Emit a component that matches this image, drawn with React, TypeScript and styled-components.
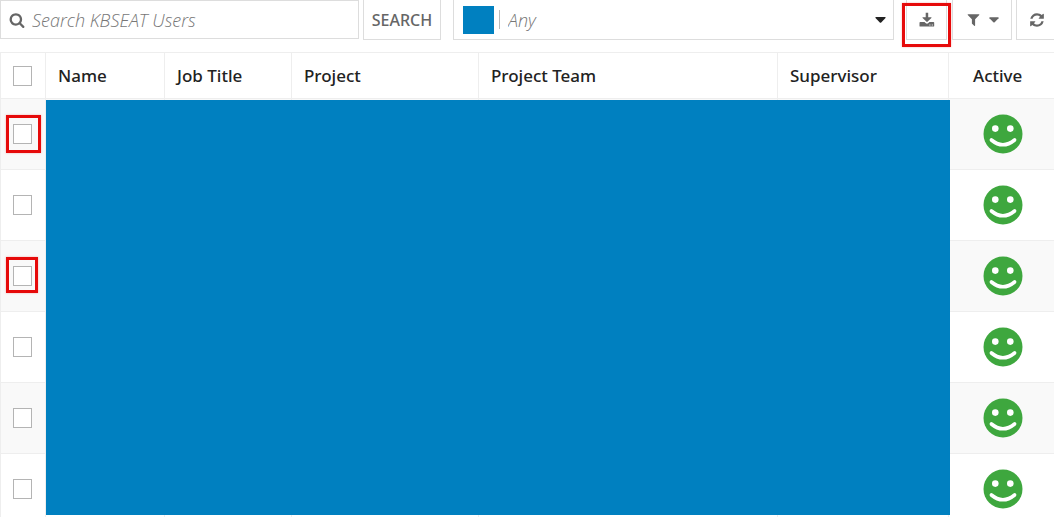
import React from "react";
import styled, { createGlobalStyle } from "styled-components";

const BLUE = "#0080c0";
const RED = "#e60a0a";
const LINE = "#eeeeee";
const EDGE = "#dddddd";

const GlobalStyle = createGlobalStyle`
  *, *::before, *::after { box-sizing: border-box; }
  html { scrollbar-width: none; }
  body {
    margin: 0;
    background: #ffffff;
    color: #222222;
    font-family: "Noto Sans", "Open Sans", sans-serif;
    font-size: 16px;
    line-height: 24px;
  }
  button, input, select { font: inherit; color: inherit; }
`;

const Page = styled.main`
  overflow: hidden;
`;

const Toolbar = styled.form`
  display: flex;
  align-items: flex-start;
  height: 52px;
  margin-right: -3px;
`;

const SearchField = styled.label`
  display: flex;
  align-items: center;
  flex: 0 1 359px;
  height: 39px;
  padding: 0 8px;
  gap: 7px;
  border: 1px solid ${EDGE};
  color: #666666;
`;

const SearchInput = styled.input`
  flex: 1;
  min-width: 0;
  padding: 0;
  border: 0;
  outline: 0;
  background: transparent;
  font-family: "Open Sans", sans-serif;
  font-size: 18px;
  &::placeholder {
    color: #777777;
    font-style: italic;
    font-weight: 300;
    opacity: 1;
  }
`;

const ToolButton = styled.button<{ $width: number; $gap: number }>`
  position: relative;
  display: flex;
  align-items: center;
  justify-content: center;
  gap: 8px;
  flex: 0 0 ${(p) => p.$width}px;
  height: 40px;
  margin: 0 0 0 ${(p) => p.$gap}px;
  padding: 0;
  border: 1px solid ${EDGE};
  border-top: 0;
  background: #ffffff;
  color: #666666;
  font-weight: 500;
`;

const FilterBox = styled.label`
  display: flex;
  align-items: center;
  flex: 1;
  min-width: 0;
  height: 40px;
  margin-left: 12px;
  padding: 0 7px 0 9px;
  border: 1px solid ${EDGE};
  border-top: 0;
`;

const Swatch = styled.span`
  width: 31px;
  height: 28px;
  background: ${BLUE};
`;

const Divider = styled.span`
  width: 1px;
  height: 19px;
  margin: 0 8px 0 5px;
  background: #bbbbbb;
`;

const FilterSelect = styled.select`
  flex: 1;
  min-width: 0;
  padding: 0;
  border: 0;
  outline: 0;
  appearance: none;
  background: transparent;
  color: #777777;
  font-family: "Open Sans", sans-serif;
  font-size: 18px;
  font-style: italic;
  font-weight: 300;
`;

const Highlight = styled.span<{ $inset: string }>`
  position: absolute;
  inset: ${(p) => p.$inset};
  border: 3px solid ${RED};
  box-shadow: 0 0 2px rgba(230, 10, 10, 0.3);
  pointer-events: none;
`;

const TableArea = styled.section`
  position: relative;
`;

const Table = styled.table`
  width: 100%;
  table-layout: fixed;
  border-collapse: separate;
  border-spacing: 0;
  border-top: 1px solid ${LINE};
  border-left: 1px solid ${LINE};
`;

const HeadCell = styled.th<{ $width?: number; $indent?: number }>`
  width: ${(p) => (p.$width ? `${p.$width}px` : "auto")};
  height: 46px;
  padding: 0 0 0 ${(p) => p.$indent ?? 12}px;
  border-right: 1px solid ${LINE};
  border-bottom: 1px solid ${LINE};
  text-align: left;
  font-size: 17px;
  font-weight: 500;
  &:last-child { border-right: 0; }
`;

const Row = styled.tr`
  height: 71px;
  &:nth-child(odd) { background: #f9f9f9; }
`;

const Cell = styled.td<{ $indent?: number }>`
  padding: 0 0 0 ${(p) => p.$indent ?? 12}px;
  border-right: 1px solid ${LINE};
  border-bottom: 1px solid ${LINE};
  &:last-child { border-right: 0; }
`;

const Tick = styled.label`
  position: relative;
  display: block;
  width: 19px;
  height: 20px;
`;

const TickInput = styled.input`
  display: block;
  width: 100%;
  height: 100%;
  margin: 0;
  appearance: none;
  border: 1px solid #b4b4b4;
  background: #ffffff;
`;

const Cover = styled.div`
  position: absolute;
  top: 48px;
  right: 104px;
  bottom: 10px;
  left: 46px;
  background: ${BLUE};
`;

const Icon = styled.svg`
  display: block;
  flex: none;
  fill: currentColor;
`;

const GLYPHS = {
  search:
    "M1216 832q0-185-131.5-316.5t-316.5-131.5-316.5 131.5-131.5 316.5 131.5 316.5 316.5 131.5 316.5-131.5 131.5-316.5zm512 832q0 52-38 90t-90 38q-54 0-90-38l-343-342q-179 124-399 124-143 0-273.5-55.5t-225-150-150-225-55.5-273.5 55.5-273.5 150-225 225-150 273.5-55.5 273.5 55.5 225 150 150 225 55.5 273.5q0 220-124 399l343 343q37 37 37 90z",
  filter:
    "M1595 295q17 41-14 70l-493 493v742q0 42-39 59-13 5-25 5-27 0-45-19l-256-256q-19-19-19-45v-486l-493-493q-31-29-14-70 17-39 59-39h1280q42 0 59 39z",
  refresh:
    "M1639 1056q0 5-1 7-64 268-268 434.5t-478 166.5q-146 0-282.5-55t-243.5-157l-129 129q-19 19-45 19t-45-19-19-45v-448q0-26 19-45t45-19h448q26 0 45 19t19 45-19 45l-137 137q71 66 161 102t187 36q134 0 250-65t186-179q11-17 53-117 8-23 30-23h192q13 0 22.5 9.5t9.5 22.5zm25-800v448q0 26-19 45t-45 19h-448q-26 0-45-19t-19-45 19-45l138-138q-148-137-349-137-134 0-250 65t-186 179q-11 17-53 117-8 23-30 23h-199q-13 0-22.5-9.5t-9.5-22.5v-7q65-268 270-434.5t480-166.5q146 0 284 55.5t245 156.5l130-129q19-19 45-19t45 19 19 45z",
};

const Glyph = ({ name, size = 16 }: { name: keyof typeof GLYPHS; size?: number }) => (
  <Icon width={size} height={size} viewBox="0 0 1792 1792" aria-hidden="true">
    <path d={GLYPHS[name]} />
  </Icon>
);

const DownloadIcon = () => (
  <Icon width="16" height="16" viewBox="0 0 16 16" aria-hidden="true">
    <path d="M6.7.8h2.5v4.4h2.9q.8 0 .3.7L8.4 9.8q-.4.4-.8 0L3.6 5.9q-.5-.7.3-.7h2.8z" />
    <path
      fillRule="evenodd"
      d="M1.2 10h4.3l1.4 1.3q1.1.9 2.2 0l1.4-1.3h4q.7 0 .7.7v3.2q0 .7-.7.7H1.2q-.7 0-.7-.7v-3.2q0-.7.7-.7zM10.4 12.4v1.1h1v-1.1zM12.8 12.4v1.1h1v-1.1z"
    />
  </Icon>
);

const Caret = ({ color, width = 11 }: { color?: string; width?: number }) => (
  <Icon width={width} height="6" viewBox="0 0 11 6" aria-hidden="true" color={color}>
    <path d="M1 0h9q1 0 .5 1L6.2 5.4q-.7.6-1.4 0L.5 1Q0 0 1 0z" />
  </Icon>
);

const Smile = () => (
  <Icon width="40" height="40" viewBox="0 0 40 40" role="img" aria-label="Active">
    <circle cx="20" cy="20" r="19.5" fill="#3ea73e" />
    <circle cx="12.3" cy="14.6" r="3.3" fill="#ffffff" />
    <circle cx="27.3" cy="14.6" r="3.3" fill="#ffffff" />
    <path d="M8.4 26Q19.8 35.5 31.6 26" fill="none" stroke="#ffffff" strokeWidth="3.6" strokeLinecap="round" />
  </Icon>
);

const columns = [
  { title: "Name", width: 119 },
  { title: "Job Title", width: 127 },
  { title: "Project", width: 187 },
  { title: "Project Team" },
  { title: "Supervisor", width: 171 },
];

const rows: { id: number; mark?: string }[] = [
  { id: 1, mark: "-9px -9px -9px -7px" },
  { id: 2 },
  { id: 3, mark: "-9px -6px -7px -7px" },
  { id: 4 },
  { id: 5 },
  { id: 6 },
];

export default function App() {
  return (
    <Page>
      <GlobalStyle />
      <Toolbar onSubmit={(e) => e.preventDefault()}>
        <SearchField>
          <Glyph name="search" />
          <SearchInput type="text" placeholder="Search KBSEAT Users" aria-label="Search KBSEAT Users" />
        </SearchField>
        <ToolButton type="submit" $width={78} $gap={4}>SEARCH</ToolButton>
        <FilterBox>
          <Swatch />
          <Divider />
          <FilterSelect aria-label="Filter value">
            <option>Any</option>
          </FilterSelect>
          <Caret color="#222222" />
        </FilterBox>
        <ToolButton type="button" $width={41} $gap={12} aria-label="Download">
          <DownloadIcon />
          <Highlight $inset="3px -5px -8px -5px" />
        </ToolButton>
        <ToolButton type="button" $width={60} $gap={5} aria-label="Filters">
          <Glyph name="filter" size={15} />
          <Caret width={10} />
        </ToolButton>
        <ToolButton type="button" $width={41} $gap={4} aria-label="Refresh">
          <Glyph name="refresh" />
        </ToolButton>
      </Toolbar>
      <TableArea>
        <Table>
          <thead>
            <tr>
              <HeadCell $width={45}>
                <Tick><TickInput type="checkbox" aria-label="Select all users" /></Tick>
              </HeadCell>
              {columns.map((c) => (
                <HeadCell key={c.title} $width={c.width}>{c.title}</HeadCell>
              ))}
              <HeadCell $width={105} $indent={24}>Active</HeadCell>
            </tr>
          </thead>
          <tbody>
            {rows.map((r) => (
              <Row key={r.id}>
                <Cell>
                  <Tick>
                    <TickInput type="checkbox" aria-label={`Select user ${r.id}`} />
                    {r.mark && <Highlight $inset={r.mark} />}
                  </Tick>
                </Cell>
                {columns.map((c) => (
                  <Cell key={c.title} />
                ))}
                <Cell $indent={34}><Smile /></Cell>
              </Row>
            ))}
          </tbody>
        </Table>
        <Cover />
      </TableArea>
    </Page>
  );
}
